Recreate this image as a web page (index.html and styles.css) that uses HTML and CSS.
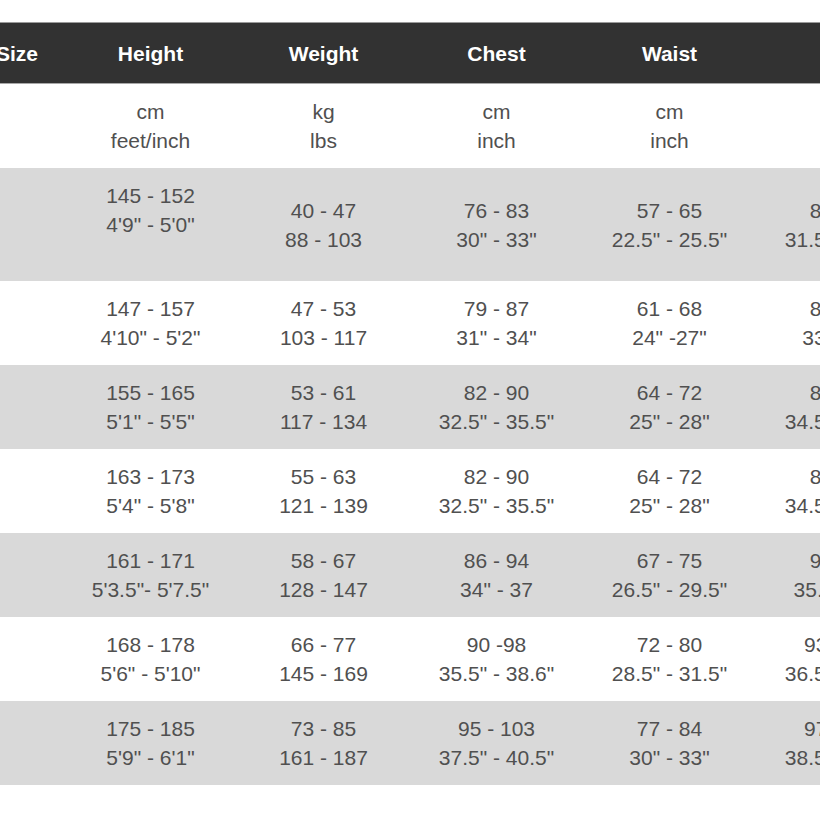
FILE: index.html
```html
<!DOCTYPE html>
<html>
<head>
<meta charset="utf-8">
<link rel="stylesheet" href="styles.css">
</head>
<body>
<div class="chart">
  <div class="row head">
    <div class="cell">Size</div>
    <div class="cell">Height</div>
    <div class="cell">Weight</div>
    <div class="cell">Chest</div>
    <div class="cell">Waist</div>
    <div class="cell">Hips</div>
  </div>
  <div class="row">
    <div class="cell"></div>
    <div class="cell"><span>cm</span><span>feet/inch</span></div>
    <div class="cell"><span>kg</span><span>lbs</span></div>
    <div class="cell"><span>cm</span><span>inch</span></div>
    <div class="cell"><span>cm</span><span>inch</span></div>
    <div class="cell"><span>cm</span><span>inch</span></div>
  </div>
  <div class="row alt">
    <div class="cell"></div>
    <div class="cell"><span>145 - 152</span><span>4'9" - 5'0"</span><span class="blank">&nbsp;</span></div>
    <div class="cell"><span>40 - 47</span><span>88 - 103</span></div>
    <div class="cell"><span>76 - 83</span><span>30" - 33"</span></div>
    <div class="cell"><span>57 - 65</span><span>22.5" - 25.5"</span></div>
    <div class="cell"><span>80 - 87</span><span>31.5" - 34.5"</span></div>
  </div>
  <div class="row">
    <div class="cell"></div>
    <div class="cell"><span>147 - 157</span><span>4'10" - 5'2"</span></div>
    <div class="cell"><span>47 - 53</span><span>103 - 117</span></div>
    <div class="cell"><span>79 - 87</span><span>31" - 34"</span></div>
    <div class="cell"><span>61 - 68</span><span>24" -27"</span></div>
    <div class="cell"><span>84 - 91</span><span>33" - 36"</span></div>
  </div>
  <div class="row alt">
    <div class="cell"></div>
    <div class="cell"><span>155 - 165</span><span>5'1" - 5'5"</span></div>
    <div class="cell"><span>53 - 61</span><span>117 - 134</span></div>
    <div class="cell"><span>82 - 90</span><span>32.5" - 35.5"</span></div>
    <div class="cell"><span>64 - 72</span><span>25" - 28"</span></div>
    <div class="cell"><span>88 - 96</span><span>34.5" - 37.5"</span></div>
  </div>
  <div class="row">
    <div class="cell"></div>
    <div class="cell"><span>163 - 173</span><span>5'4" - 5'8"</span></div>
    <div class="cell"><span>55 - 63</span><span>121 - 139</span></div>
    <div class="cell"><span>82 - 90</span><span>32.5" - 35.5"</span></div>
    <div class="cell"><span>64 - 72</span><span>25" - 28"</span></div>
    <div class="cell"><span>88 - 96</span><span>34.5" - 37.5"</span></div>
  </div>
  <div class="row alt">
    <div class="cell"></div>
    <div class="cell"><span>161 - 171</span><span>5'3.5"- 5'7.5"</span></div>
    <div class="cell"><span>58 - 67</span><span>128 - 147</span></div>
    <div class="cell"><span>86 - 94</span><span>34" - 37</span></div>
    <div class="cell"><span>67 - 75</span><span>26.5" - 29.5"</span></div>
    <div class="cell"><span>91 - 99</span><span>35.5" - 39"</span></div>
  </div>
  <div class="row">
    <div class="cell"></div>
    <div class="cell"><span>168 - 178</span><span>5'6" - 5'10"</span></div>
    <div class="cell"><span>66 - 77</span><span>145 - 169</span></div>
    <div class="cell"><span>90 -98</span><span>35.5" - 38.6"</span></div>
    <div class="cell"><span>72 - 80</span><span>28.5" - 31.5"</span></div>
    <div class="cell"><span>93 - 101</span><span>36.5" - 39.5"</span></div>
  </div>
  <div class="row alt">
    <div class="cell"></div>
    <div class="cell"><span>175 - 185</span><span>5'9" - 6'1"</span></div>
    <div class="cell"><span>73 - 85</span><span>161 - 187</span></div>
    <div class="cell"><span>95 - 103</span><span>37.5" - 40.5"</span></div>
    <div class="cell"><span>77 - 84</span><span>30" - 33"</span></div>
    <div class="cell"><span>97 - 105</span><span>38.5" - 41.5"</span></div>
  </div>
</div>
</body>
</html>
```
FILE: styles.css
```css
html, body {
  margin: 0;
  padding: 0;
  background: #ffffff;
  overflow: hidden;
}

body {
  font-family: "Liberation Sans", Arial, sans-serif;
  color: #505050;
  font-size: 21px;
}

.chart {
  margin-top: 22px;
  margin-left: -30px;
  width: 959px;
}

.row {
  display: grid;
  grid-template-columns: 94px repeat(5, 173px);
  background: #ffffff;
}

.row.alt {
  background: #d9d9d9;
}

.cell {
  display: flex;
  flex-direction: column;
  justify-content: center;
  align-items: center;
  text-align: center;
  padding: 13px 0;
  line-height: 29px;
  white-space: nowrap;
}

.row.head {
  background: #323232;
  border-top: 1px solid #9a9a9a;
  border-bottom: 1px solid #a8a8a8;
  height: 60px;
  color: #ffffff;
  font-weight: bold;
}

.row.head .cell {
  padding: 0;
}
```
